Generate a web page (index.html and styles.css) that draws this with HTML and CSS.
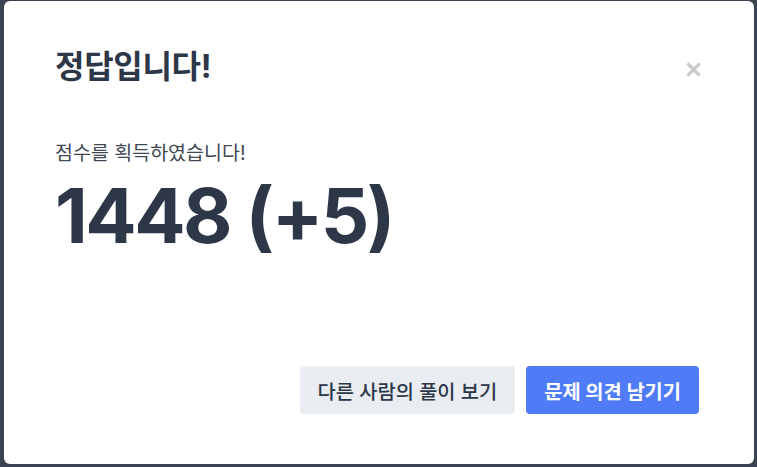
FILE: index.html
```html
<!DOCTYPE html>
<html lang="ko">
<head>
<meta charset="utf-8">
<link rel="stylesheet" href="styles.css">
</head>
<body>
<div class="modal">
  <div class="header">
    <h1 class="title">정답입니다!</h1>
    <button class="close" aria-label="닫기">
      <svg width="15" height="15" viewBox="0 0 15 15"><path d="M2.5 2.5L12.5 12.5M12.5 2.5L2.5 12.5" stroke="#cbcbcb" stroke-width="3.2" stroke-linecap="square"/></svg>
    </button>
  </div>
  <div class="body">
    <p class="sub">점수를 획득하였습니다!</p>
    <p class="score">1448 (+5)</p>
  </div>
  <div class="footer">
    <button class="btn btn-gray">다른 사람의 풀이 보기</button>
    <button class="btn btn-blue">문제 의견 남기기</button>
  </div>
</div>
</body>
</html>
```
FILE: styles.css
```css
html, body {
  margin: 0;
  padding: 0;
  height: 100%;
}
body {
  background: #3b4252;
  font-family: Inter, "Noto Sans CJK KR", sans-serif;
  color: #2d3748;
  padding: 1px 3px 3px 4px;
  box-sizing: border-box;
}
.modal {
  background: #fff;
  border-radius: 6px;
  width: 750px;
  height: 463px;
  box-sizing: border-box;
  padding: 40px 55px 50px 51px;
  display: flex;
  flex-direction: column;
}
.header {
  display: flex;
  justify-content: space-between;
  align-items: center;
}
.title {
  margin: 0;
  font-size: 32px;
  font-weight: 700;
  line-height: 52px;
  letter-spacing: -0.3px;
}
.close {
  border: 0;
  background: none;
  padding: 0;
  margin-right: -2px;
  margin-top: 4px;
  width: 15px;
  height: 15px;
  display: flex;
}
.body {
  padding-top: 46px;
}
.sub {
  margin: 0;
  font-size: 19.5px;
  line-height: 28px;
  color: #3f4753;
}
.score {
  margin: 0;
  font-size: 76px;
  font-weight: 700;
  line-height: 96px;
  letter-spacing: -2.5px;
}
.footer {
  margin-top: auto;
  display: flex;
  justify-content: flex-end;
  gap: 11px;
}
.btn {
  border: 0;
  border-radius: 4px;
  height: 48px;
  padding: 0 18px;
  font-family: Inter, "Noto Sans CJK KR", sans-serif;
  font-size: 19.8px;
}
.btn-gray {
  background: #e9ecf1;
  color: #2d3748;
  font-weight: 500;
}
.btn-blue {
  background: #4f7bf7;
  color: #fff;
  font-weight: 700;
}
```
